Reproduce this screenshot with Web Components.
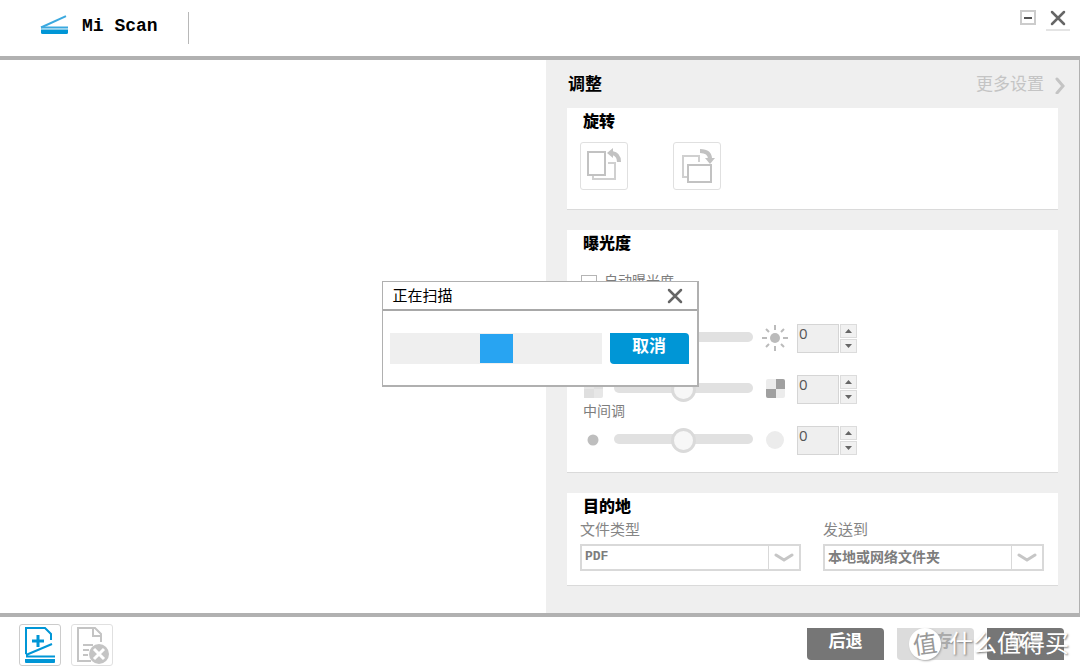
<!DOCTYPE html>
<html lang="zh-CN">
<head>
<meta charset="utf-8">
<title>Mi Scan</title>
<style>
  html, body { margin: 0; }
  body {
    background: #fff;
    font-family: "Liberation Sans", "Noto Sans CJK SC", sans-serif;
    color: #000;
  }
</style>
</head>
<body>
<scan-app></scan-app>
<script>
const define = (name, html, setup) => {
  const template = document.createElement('template');
  template.innerHTML = '<style>*{box-sizing:border-box}button,input,select{font:inherit;margin:0}button{padding:0;cursor:pointer}svg{display:block}</style>' + html;
  customElements.define(name, class extends HTMLElement {
    connectedCallback() {
      if (this.shadowRoot) return;
      this.attachShadow({ mode: 'open' }).append(template.content.cloneNode(true));
      if (setup) setup(this, this.shadowRoot);
    }
  });
};

/* Window title bar */
define('scan-header', `
<style>
  :host { display: flex; align-items: flex-start; justify-content: space-between; height: 60px; box-sizing: border-box; border-bottom: 4px solid #b1b1b1; }
  .brand { display: flex; align-items: center; gap: 13px; height: 32px; margin: 12px 0 0 40px; padding-right: 30px; border-right: 1px solid #b8b8b8; }
  .brand svg { margin-top: -7px; }
  h1 { margin: -5px 0 0; font: bold 18px/24px "Liberation Mono", monospace; }
  .controls { display: flex; gap: 6px; padding: 7px 10px 0 0; }
  button { display: grid; place-items: center; width: 24px; height: 24px; border: 0; border-bottom: 2px solid #e4e4e4; background: none; }
  button:first-child { border-color: transparent; }
</style>
<div class="brand">
  <svg width="29" height="20" viewBox="0 0 29 20"><path d="M1 12.500 26 1.200" fill="none" stroke="#3ba9df" stroke-width="2"/><path d="M1 12.500h27" stroke="#3ba9df" stroke-width="2"/><path d="M1 14.500h27v3q0 1.500-1.500 1.500h-24Q1 19 1 17.500z" fill="#0096d6"/></svg>
  <h1>Mi Scan</h1>
</div>
<div class="controls">
  <button aria-label="最小化"><svg width="16" height="16"><rect x="1" y="1" width="14" height="13" fill="#fff" stroke="#ccc" stroke-width="2"/><path d="M4 8h8" stroke="#555" stroke-width="2"/></svg></button>
  <button aria-label="关闭"><svg width="16" height="16"><path d="m2 2 12 12M14 2 2 14" stroke="#666" stroke-width="2.500" stroke-linecap="round"/></svg></button>
</div>`);

/* White group box with a bold heading */
define('scan-card', `
<style>
  :host { display: block; background: #fff; border-bottom: 1px solid #dadada; padding: 0 14px 0 13px; box-sizing: border-box; }
  h3 { margin: 0 0 0 3px; padding-top: 1px; height: 26px; font-size: 16px; line-height: 26px; font-weight: 900; }
</style>
<h3></h3><slot></slot>`, (host, root) => root.querySelector('h3').textContent = host.getAttribute('heading'));

/* Square outlined icon button */
define('icon-button', `
<style>
  :host { display: block; width: 48px; height: 48px; }
  :host([small]) { width: 42px; height: 42px; }
  button { display: grid; place-items: center; width: 100%; height: 100%; border: 1px solid #e0e0e0; border-radius: 3px; background: #fff; }
  :host([active]) button { border-color: #ccc; }
</style>
<button><slot></slot></button>`, (host, root) => root.querySelector('button').setAttribute('aria-label', host.getAttribute('label')));

/* Command button with two rounded corners */
define('action-button', `
<style>
  :host { display: block; width: 77px; height: 32px; }
  button { width: 100%; height: 100%; border: 0; border-radius: 0 4px 0 4px; background: #767676; color: #fff; font-size: 17px; line-height: 28px; font-weight: bold; padding-bottom: 4px; }
  button:disabled { background: #dcdcdc; color: #aaa; }
  :host([primary]) { width: 79px; height: 31px; }
  :host([primary]) button { background: #0096d6; }
</style>
<button><slot></slot></button>`, (host, root) => root.querySelector('button').disabled = host.hasAttribute('disabled'));

/* Slider with end icons and a number box */
define('level-row', `
<style>
  :host { display: block; }
  label { display: block; margin-left: 3px; height: 22px; font-size: 14px; line-height: 14px; color: #7d7d7d; }
  .row { display: grid; grid-template-columns: 24px 139px 26px 60px; column-gap: 9px; align-items: start; height: 29px; padding-left: 1px; }
  .icon { display: grid; place-items: center; height: 27px; }
  .range { appearance: none; width: 139px; height: 26px; background: none; }
  .range::-webkit-slider-runnable-track { height: 10px; border-radius: 5px; background: #e1e1e1; }
  .range::-webkit-slider-thumb { appearance: none; width: 25px; height: 25px; margin-top: -6px; border: 3px solid #dadada; border-radius: 50%; background: #f7f7f7; }
  .spin { display: grid; grid-template: 14px 14px / 42px 17px; gap: 1px; }
  .spin input { grid-row: span 2; min-width: 0; border: 1px solid #d5d5d5; background: #efefef; padding: 0 0 11px 1px; color: #555; font-family: "Open Sans", sans-serif; font-size: 15px; line-height: 16px; }
  .spin button { display: grid; place-items: center; border: 1px solid #dcdcdc; background: #f1f1f1; }
</style>
<label for="range"></label>
<div class="row">
  <span class="icon"><slot name="low"></slot></span>
  <input class="range" id="range" type="range" min="-50" max="50" value="0">
  <span class="icon"><slot name="high"></slot></span>
  <span class="spin">
    <input type="text" value="0">
    <button aria-label="增加"><svg width="7" height="4"><path d="M0 4 3.500 0 7 4z" fill="#666"/></svg></button>
    <button aria-label="减少"><svg width="7" height="4"><path d="M0 0h7L3.500 4z" fill="#666"/></svg></button>
  </span>
</div>`, (host, root) => {
  root.querySelector('label').textContent = host.getAttribute('label');
  root.querySelector('.spin input').setAttribute('aria-label', host.getAttribute('label'));
});

/* Labelled drop-down */
define('select-field', `
<style>
  :host { display: block; }
  label { display: block; font-size: 15px; line-height: 22px; color: #858585; }
  .box { display: grid; grid-template-columns: 1fr 33px; height: 27px; margin-top: 3px; }
  select { grid-area: 1 / 1 / 2 / 3; appearance: none; width: 100%; height: 27px; border: 2px solid #d9d9d9; border-radius: 0; background: #fff; color: #7d7d7d; padding: 0 36px 2px 3px; font: bold 14px/21px "Noto Sans CJK SC", sans-serif; }
  :host([latin]) select { font: bold 13px/21px "Liberation Mono", monospace; }
  .arrow { grid-area: 1 / 2; position: relative; pointer-events: none; display: grid; place-items: center; margin: 2px 2px 2px 0; border-left: 1px solid #d9d9d9; }
</style>
<label for="s"></label>
<div class="box">
  <select id="s"><option></option></select>
  <span class="arrow"><svg width="20" height="10"><path d="m2 2 8 5 8-5" fill="none" stroke="#c6c6c6" stroke-width="3" stroke-linecap="round"/></svg></span>
</div>`, (host, root) => {
  root.querySelector('label').textContent = host.getAttribute('label');
  root.querySelector('option').textContent = host.getAttribute('value');
});

/* Adjustment panel */
define('adjust-panel', `
<style>
  :host { display: flex; flex-direction: column; background: #efefef; border-right: 1px solid #b1b1b1; padding: 0 21px 27px; box-sizing: border-box; }
  header { display: flex; justify-content: space-between; align-items: center; height: 48px; padding-top: 2px; }
  h2 { margin: 0 0 0 1px; font-size: 17px; line-height: 24px; }
  a { display: flex; align-items: center; gap: 11px; margin-right: -7px; font-size: 17px; line-height: 24px; color: #c4c4c4; text-decoration: none; }
  .stack { display: flex; flex-direction: column; gap: 20px; }
  .rotate { height: 102px; }
  .exposure { height: 243px; }
  .target { height: 93px; }
  .rotations { display: flex; gap: 45px; padding-top: 8px; }
  .auto { display: flex; align-items: center; gap: 7px; height: 20px; margin: 14px 0 12px 1px; font-size: 14px; color: #7d7d7d; }
  .auto input { appearance: none; width: 16px; height: 16px; margin-top: 6px; border: 1px solid #b5b5b5; background: #fff; }
  .selects { display: grid; grid-template-columns: 1fr 1fr; gap: 22px; }
</style>
<header>
  <h2>调整</h2>
  <a href="#more">更多设置 <svg width="10" height="18"><path d="m2 3 6 7-6 7" fill="none" stroke="#c4c4c4" stroke-width="3" stroke-linecap="round"/></svg></a>
</header>
<div class="stack">
<scan-card class="rotate" heading="旋转">
  <div class="rotations">
    <icon-button label="向左旋转"><svg width="36" height="36" fill="none" stroke="#c2c2c2"><path d="M22 15h7v16H7v-4" stroke="#d0d0d0" stroke-width="2"/><rect x="2" y="4" width="17" height="23" stroke-width="2"/><path d="M26 5q7 1 7 9" stroke-width="4"/><path d="m27 0-6 5 6 5z" fill="#c2c2c2" stroke="none"/></svg></icon-button>
    <icon-button label="向右旋转"><svg width="36" height="36" fill="none" stroke="#c2c2c2"><path d="M8 29H4V8h16v6" stroke="#d0d0d0" stroke-width="2"/><rect x="9" y="17" width="23" height="17" stroke-width="2"/><path d="M21 3q10 0 10 8" stroke-width="4"/><path d="M26 10h10l-5 6z" fill="#c2c2c2" stroke="none"/></svg></icon-button>
  </div>
</scan-card>
<scan-card class="exposure" heading="曝光度">
  <label class="auto"><input type="checkbox">自动曝光度</label>
  <level-row label="亮度">
    <svg slot="low" width="20" height="20"><circle cx="10" cy="10" r="5" fill="#ddd"/></svg>
    <svg slot="high" width="26" height="26"><circle cx="13" cy="13" r="5" fill="#bbb"/><path d="M13 0v5M13 21v5M0 13h5M21 13h5M4 4l3 3M19 19l3 3M4 22l3-3M19 7l3-3" stroke="#bbb" stroke-width="2"/></svg>
  </level-row>
  <level-row label="对比度">
    <svg slot="low" width="19" height="19"><rect width="19" height="19" rx="2" fill="#e7e7e7"/><path d="M10 0h9v10h-9zM0 10h10v9H0z" fill="#dfdfdf"/></svg>
    <svg slot="high" width="19" height="19"><rect width="19" height="19" rx="2" fill="#ececec"/><path d="M10 0h7q2 0 2 2v8h-9zM0 10h10v9H2q-2 0-2-2z" fill="#a0a0a0"/></svg>
  </level-row>
  <level-row label="中间调">
    <svg slot="low" width="12" height="12"><circle cx="6" cy="6" r="5.500" fill="#bebebe"/></svg>
    <svg slot="high" width="18" height="18"><circle cx="9" cy="9" r="9" fill="#ececec"/></svg>
  </level-row>
</scan-card>
<scan-card class="target" heading="目的地">
  <div class="selects">
    <select-field latin label="文件类型" value="PDF"></select-field>
    <select-field label="发送到" value="本地或网络文件夹"></select-field>
  </div>
</scan-card>
</div>`);

/* Bottom bar */
define('scan-footer', `
<style>
  :host { display: flex; justify-content: space-between; align-items: flex-start; position: relative; height: 57px; box-sizing: border-box; border-top: 4px solid #b1b1b1; padding: 7px 16px 0 19px; }
  .tools { display: flex; gap: 10px; }
  .actions { display: flex; gap: 13px; padding-top: 4px; }
  .stamp { position: absolute; right: 11px; top: 10px; display: flex; align-items: center; gap: 8px; color: #fff; font-size: 24px; line-height: 34px; text-shadow: 1px 1px 2px #777; pointer-events: none; }
  .seal { display: grid; place-items: center; width: 32px; height: 32px; border-radius: 50%; background: #fff; color: #999; box-shadow: 1px 1px 2px #aaa; text-shadow: none; }
  .seal span { transform: rotate(-8deg); }
</style>
<div class="tools">
  <icon-button small active label="添加扫描"><svg width="32" height="38" fill="none" stroke="#0096d6" stroke-width="2"><path d="M2 28V2h19l6 6v6" /><path d="M14 9v12M8 15h12" stroke-width="3"/><path d="M2 29 28 18M2 30.500h29"/><path d="M1 33h30v3q0 1-1 1H2q-1 0-1-1z" fill="#0096d6" stroke="none"/></svg></icon-button>
  <icon-button small label="删除页面"><svg width="34" height="38" fill="none" stroke="#c4c4c4" stroke-width="2"><path d="M16 35H3V2h17l6 6v8M18 2v8h8M8 19h10M8 24h6M8 29h5"/><circle cx="24" cy="28" r="10" fill="#c4c4c4" stroke="none"/><path d="m19 23 10 10M29 23 19 33" stroke="#fff" stroke-width="3"/></svg></icon-button>
</div>
<div class="actions">
  <action-button>后退</action-button>
  <action-button disabled>保存</action-button>
  <action-button>取消</action-button>
</div>
<div class="stamp"><span class="seal"><span>值</span></span><span>什么值得买</span></div>`);

/* Progress window shown over the page */
define('scan-progress', `
<style>
  :host { position: absolute; inset: 0; display: grid; place-items: center; padding-bottom: 2px; }
  section { width: 317px; background: #fff; border: 1px solid #b0b0b0; border-width: 1px 2px 2px 1px; }
  header { display: flex; justify-content: space-between; align-items: center; height: 29px; border-bottom: 2px solid #a8a8a8; padding: 0 14px 0 10px; }
  h2 { margin: 0; font-size: 15px; line-height: 22px; font-weight: normal; }
  header button { border: 0; background: none; }
  .body { display: flex; gap: 8px; padding: 22px 8px 21px 7px; }
  .track { flex: 1; height: 31px; padding: 1px 0 1px 90px; background: #efefef; }
  .track i { display: block; width: 33px; height: 29px; background: #28a4f2; }
</style>
<section role="dialog" aria-labelledby="t">
  <header><h2 id="t">正在扫描</h2><button aria-label="关闭"><svg width="16" height="16"><path d="m2 2 12 12M14 2 2 14" stroke="#666" stroke-width="2.500" stroke-linecap="round"/></svg></button></header>
  <div class="body"><div class="track" role="progressbar" aria-label="正在扫描"><i></i></div><action-button primary>取消</action-button></div>
</section>`);

define('scan-app', `
<style>
  :host { position: relative; display: flex; flex-direction: column; min-height: 100vh; background: #fff; }
  main { flex: 1; display: grid; grid-template-columns: 1fr 534px; }
</style>
<scan-header></scan-header>
<main><div></div><adjust-panel></adjust-panel></main>
<scan-footer></scan-footer>
<scan-progress></scan-progress>`);
</script>
</body>
</html>
